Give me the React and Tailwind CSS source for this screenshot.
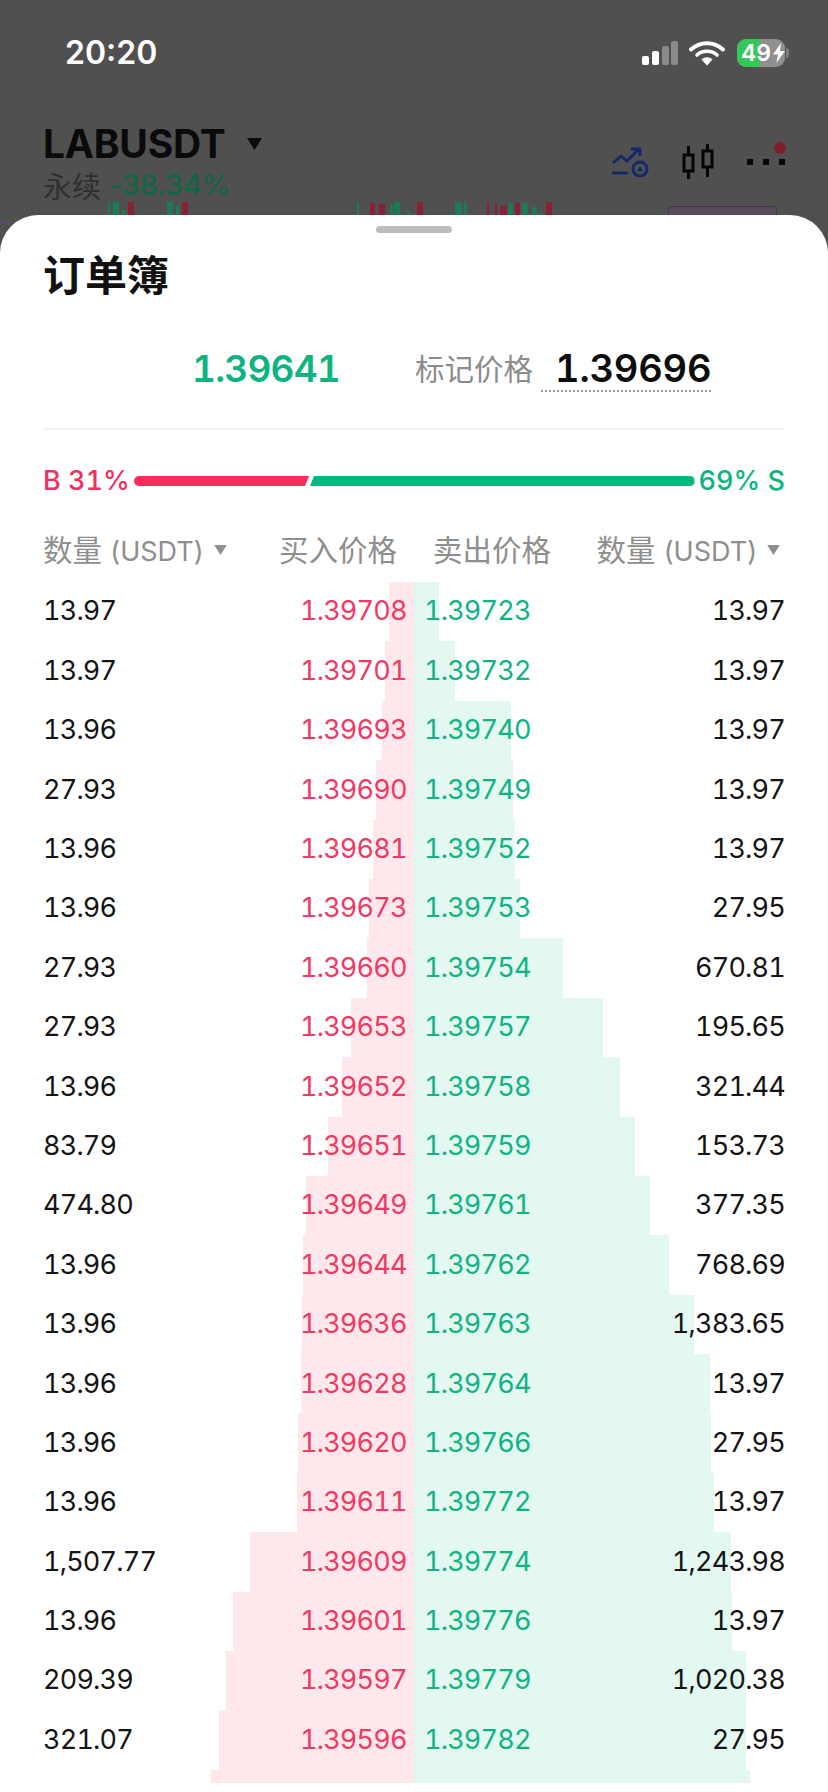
const CJK = '"Noto Sans CJK SC"';
const rows = [
  ["13.97","1.39708","1.39723","13.97",389,439],
  ["13.97","1.39701","1.39732","13.97",385,455],
  ["13.96","1.39693","1.39740","13.97",382,511],
  ["27.93","1.39690","1.39749","13.97",376,513],
  ["13.96","1.39681","1.39752","13.97",373,515],
  ["13.96","1.39673","1.39753","27.95",369,520],
  ["27.93","1.39660","1.39754","670.81",367,563],
  ["27.93","1.39653","1.39757","195.65",351,603],
  ["13.96","1.39652","1.39758","321.44",342,620],
  ["83.79","1.39651","1.39759","153.73",328,635],
  ["474.80","1.39649","1.39761","377.35",306,650],
  ["13.96","1.39644","1.39762","768.69",303,669],
  ["13.96","1.39636","1.39763","1,383.65",302,694],
  ["13.96","1.39628","1.39764","13.97",301,710],
  ["13.96","1.39620","1.39766","27.95",298,711],
  ["13.96","1.39611","1.39772","13.97",297,714],
  ["1,507.77","1.39609","1.39774","1,243.98",250,731],
  ["13.96","1.39601","1.39776","13.97",233,732],
  ["209.39","1.39597","1.39779","1,020.38",226,746],
  ["321.07","1.39596","1.39782","27.95",219,746],
];

function Caret({ className }) {
  return (
    <svg viewBox="0 0 10 8" className={className} fill="currentColor">
      <path d="M0 0h10L5 8z" />
    </svg>
  );
}

function Bars({ left, right }) {
  return (
    <>
      <div className="absolute top-0 bottom-0 bg-[#fee8ec]" style={{ left: left - 43, width: 414 - left }} />
      <div className="absolute top-0 bottom-0 bg-[#e2f8f0]" style={{ left: 414 - 43, width: right - 414 }} />
    </>
  );
}

function Row({ r }) {
  return (
    <div className="relative h-[59.4px] flex items-center text-[27px] tracking-[-0.8px] text-[#141414] [font-variant-numeric:tabular-nums]">
      <Bars left={r[4]} right={r[5]} />
      <span className="relative w-[257px]">{r[0]}</span>
      <span className="relative w-[124px] text-[#ee3a64]">{r[1]}</span>
      <span className="relative text-[#10b384]">{r[2]}</span>
      <span className="relative ml-auto">{r[3]}</span>
    </div>
  );
}

function StatusIcons() {
  return (
    <div className="flex items-center">
      <svg width="36" height="25" viewBox="0 0 36 25" className="mr-[11px]">
        <rect x="0" y="15" width="7" height="9" rx="2" fill="#fff" />
        <rect x="10" y="10" width="7" height="14" rx="2" fill="#fff" />
        <rect x="20" y="5" width="7" height="19" rx="2" fill="#8a8a8a" />
        <rect x="29" y="0" width="7" height="24" rx="2" fill="#8a8a8a" />
      </svg>
      <svg width="36" height="26" viewBox="0 0 36 26" className="mr-[12px]">
        <path d="M2 9.5C11 1 25 1 34 9.5" fill="none" stroke="#fff" strokeWidth="4" strokeLinecap="round" />
        <path d="M8 15C13.5 10 22.5 10 28 15" fill="none" stroke="#fff" strokeWidth="3.6" strokeLinecap="round" />
        <path d="M12.5 19.5C15.5 16.5 20.5 16.5 23.5 19.5L18 25.5z" fill="#fff" />
      </svg>
      <div className="relative w-[48px] h-[28px] rounded-[9px] overflow-hidden bg-[#8f8f8f]">
        <div className="absolute left-0 top-0 bottom-0 w-[23px] bg-[#35c759]" />
        <div className="absolute inset-0 flex items-center pl-[4px] text-[23px] font-semibold text-white leading-none">
          <span className="relative">49</span>
          <svg width="12" height="20" viewBox="0 0 12 20" className="ml-[2px]">
            <path d="M8 0L0 11.5h5L3.5 20 12 8H7z" fill="#fff" />
          </svg>
        </div>
      </div>
      <div className="w-[3px] h-[10px] bg-[#7d7d7d] rounded-r-full ml-[1px]" />
    </div>
  );
}

const G = "#1c7a55";
const R = "#8a1f38";
const candles = [
  [108,2,13,G],[113,6,13,G],[122,3,5,G],[128,6,13,R],
  [167,6,13,G],[176,3,9,G],[182,6,13,R],
  [357,2,12,G],[370,5,12,R],[379,6,11,R],[390,3,10,G],[394,6,13,G],[407,3,4,G],[417,6,13,R],
  [455,7,13,G],[464,3,12,G],
  [487,2,13,R],[495,2,11,R],[500,7,9,R],[508,5,12,G],[515,5,12,R],[522,6,12,G],[532,5,8,G],[540,2,3,G],[546,6,13,R],
];

function Backdrop() {
  return (
    <div className="relative h-[240px] bg-[#505050] overflow-hidden">
      <div className="flex items-center justify-between pl-[65px] pr-[39px] pt-[34px]">
        <span className="text-[32px] leading-[38px] font-semibold text-white">20:20</span>
        <StatusIcons />
      </div>
      <div className="flex items-start justify-between pl-[43px] pr-[43px] mt-[49px]">
        <div>
          <div className="flex items-center text-[39px] leading-[46px] font-bold text-[#0a0a0a] tracking-[-0.2px]">
            LABUSDT
            <Caret className="w-[15px] h-[12px] ml-[21px] text-[#0a0a0a]" />
          </div>
          <div className="flex items-center text-[29px] leading-[36px]">
            <span className="text-[#2f2f2f]" style={{ fontFamily: CJK }}>永续</span>
            <span className="ml-[8px] font-medium text-[#116645] tracking-[-0.3px]">-38.34%</span>
          </div>
        </div>
        <div className="flex items-center mt-[23px]">
          <svg width="38" height="30" viewBox="0 0 38 30" fill="none" stroke="#13286a" strokeWidth="2.8" className="mr-[33px]">
            <path d="M2 16l8-7 6 5 12-12" />
            <path d="M20 2h9v7" />
            <path d="M1 26h16" />
            <circle cx="29" cy="22" r="7" />
            <path d="M29 19l3 5h-6z" fill="#13286a" stroke="none" />
          </svg>
          <svg width="32" height="35" viewBox="0 0 32 35" fill="none" stroke="#050505" strokeWidth="3" className="mr-[33px]">
            <rect x="2" y="11" width="9" height="16" />
            <path d="M6.5 2v9M6.5 27v8" />
            <rect x="21" y="7" width="9" height="16" />
            <path d="M25.5 0v7M25.5 23v10" />
          </svg>
          <div className="relative flex gap-[10px] items-center">
            <div className="w-[6px] h-[6px] bg-[#050505]" />
            <div className="w-[6px] h-[6px] bg-[#050505]" />
            <div className="w-[6px] h-[6px] bg-[#050505]" />
            <div className="absolute -right-[1px] -top-[17px] w-[12px] h-[12px] rounded-full bg-[#7d2028]" />
          </div>
        </div>
      </div>
      {candles.map((c, i) => (
        <div key={i} className="absolute" style={{ left: c[0], top: 215 - c[2], width: c[1], height: c[2], background: c[3] }} />
      ))}
      <div className="absolute left-[668px] top-[206px] w-[109px] h-[20px] border border-[#47324f] bg-[#554c57] rounded-[3px]" />
      <div className="absolute left-0 top-[222px] w-[10px] h-[2px] bg-[#5c4a74]" />
    </div>
  );
}

export default function App() {
  return (
    <div className="relative w-[828px] h-[1792px] overflow-hidden bg-[#505050]" style={{ fontFamily: `Inter, ${CJK}, sans-serif` }}>
      <Backdrop />
      <div className="absolute left-0 right-0 top-[215px] bottom-0 bg-white rounded-t-[38px] px-[43px]">
        <div className="flex justify-center pt-[11px]">
          <div className="w-[76px] h-[7px] rounded-full bg-[#bdbdbd]" />
        </div>
        <div className="mt-[13px] text-[42px] leading-[54px] font-bold text-[#111]" style={{ fontFamily: CJK }}>订单簿</div>
        <div className="flex items-center h-[76px] mt-[31px] [font-variant-numeric:tabular-nums]">
          <span className="ml-[149px] w-[148px] text-[37px] tracking-[-0.8px] font-semibold text-[#0db482] whitespace-nowrap">1.39641</span>
          <span className="ml-[75px] text-[29.5px] text-[#8c8c8c] -mt-[3px]" style={{ fontFamily: CJK }}>标记价格</span>
          <span className="ml-[8px] pl-[14px] text-[38px] tracking-[-0.2px] leading-[44px] font-semibold text-[#0d0d0d] border-b-2 border-dotted border-[#9a9a9a]">1.39696</span>
        </div>
        <div className="h-[2px] bg-[#f3f3f3] mt-[21px]" />
        <div className="flex items-center h-[44px] mt-[29px] text-[27px] font-medium [font-variant-numeric:tabular-nums]">
          <span className="w-[86px] shrink-0 whitespace-nowrap text-[#f0305f]">B 31%</span>
          <div className="flex ml-[5px] mr-[4px] flex-1">
            <div className="h-[10px] w-[175px] bg-[#fb2c5c] rounded-l-full [clip-path:polygon(0_0,100%_0,calc(100%-4px)_100%,0_100%)]" />
            <div className="ml-[1px] h-[10px] flex-1 bg-[#07b77f] rounded-r-full [clip-path:polygon(4px_0,100%_0,100%_100%,0_100%)]" />
          </div>
          <span className="shrink-0 whitespace-nowrap text-[#0db482]">69% S</span>
        </div>
        <div className="flex items-center h-[44px] mt-[25px] text-[29.5px] text-[#8e8e8e]">
          <span className="w-[236px] flex items-center">
            <span>数量 <span className="text-[27px]">(USDT)</span></span>
            <Caret className="w-[13px] h-[10px] ml-[10px] text-[#8e8e8e]" />
          </span>
          <span className="w-[154px]">买入价格</span>
          <span>卖出价格</span>
          <span className="ml-auto flex items-center">
            <span>数量 <span className="text-[27px]">(USDT)</span></span>
            <Caret className="w-[13px] h-[10px] ml-[10px] mr-[5px] text-[#8e8e8e]" />
          </span>
        </div>
        <div className="mt-[10px]">
          {rows.map((r, i) => <Row key={i} r={r} />)}
          <div className="relative h-[13px]">
            <Bars left={211} right={750} />
          </div>
        </div>
      </div>
    </div>
  );
}
